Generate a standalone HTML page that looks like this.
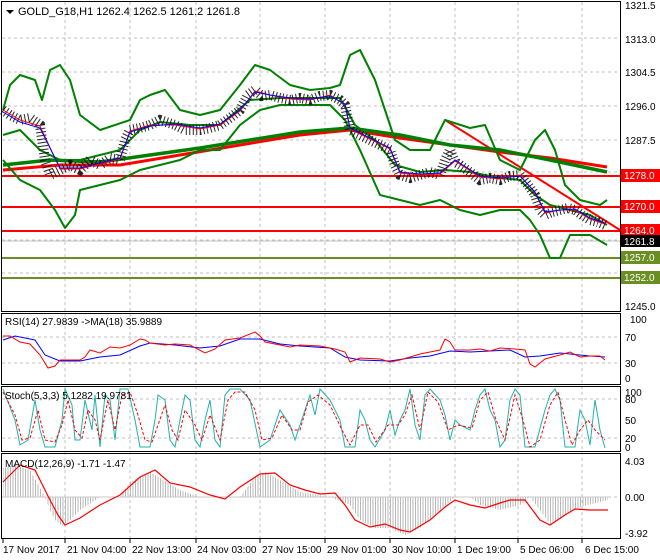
<!DOCTYPE html>
<html><head><meta charset="utf-8"><style>
body{margin:0;background:#fff;}
svg{display:block;font-family:"Liberation Sans",sans-serif;font-size:10px;}
</style></head><body>
<svg width="660" height="560" viewBox="0 0 660 560" xmlns="http://www.w3.org/2000/svg">
<defs><pattern id="vl" width="2.5" height="4" patternUnits="userSpaceOnUse"><rect x="0" y="0" width="1" height="4" fill="#b8b8b8"/></pattern></defs>
<rect width="660" height="560" fill="#fff"/>
<g stroke="#c0c0c0" stroke-dasharray="3,3" stroke-width="1">
<line x1="65" y1="2" x2="65" y2="538"/><line x1="130" y1="2" x2="130" y2="538"/><line x1="196" y1="2" x2="196" y2="538"/><line x1="260" y1="2" x2="260" y2="538"/><line x1="325" y1="2" x2="325" y2="538"/><line x1="390" y1="2" x2="390" y2="538"/><line x1="455" y1="2" x2="455" y2="538"/><line x1="518" y1="2" x2="518" y2="538"/><line x1="582" y1="2" x2="582" y2="538"/>
<line x1="2" y1="38" x2="620" y2="38"/><line x1="2" y1="72" x2="620" y2="72"/><line x1="2" y1="106" x2="620" y2="106"/><line x1="2" y1="140" x2="620" y2="140"/><line x1="2" y1="172" x2="620" y2="172"/><line x1="2" y1="207" x2="620" y2="207"/><line x1="2" y1="240" x2="620" y2="240"/><line x1="2" y1="273" x2="620" y2="273"/>
<line x1="2" y1="337" x2="620" y2="337"/><line x1="2" y1="363" x2="620" y2="363"/>
<line x1="2" y1="399" x2="620" y2="399"/><line x1="2" y1="438" x2="620" y2="438"/>
<line x1="2" y1="497" x2="620" y2="497"/>
</g>
<g fill="none" stroke="#000" stroke-width="1">
<rect x="1.5" y="1.5" width="619" height="310"/>
<rect x="1.5" y="313.5" width="619" height="71"/>
<rect x="1.5" y="386.5" width="619" height="65"/>
<rect x="1.5" y="453.5" width="619" height="85"/>
</g>
<line x1="2" y1="176" x2="620" y2="176" stroke="#f00" stroke-width="2"/>
<line x1="2" y1="207" x2="620" y2="207" stroke="#f00" stroke-width="2"/>
<line x1="2" y1="231" x2="620" y2="231" stroke="#f00" stroke-width="2"/>
<line x1="2" y1="258" x2="620" y2="258" stroke="#6b8e23" stroke-width="2"/>
<line x1="2" y1="278" x2="620" y2="278" stroke="#6b8e23" stroke-width="2"/>
<line x1="2" y1="241" x2="620" y2="241" stroke="#c0c0c0" stroke-width="1"/>
<line x1="445" y1="120" x2="620" y2="230" stroke="#f00" stroke-width="2"/>
<polyline fill="none" stroke="#f00" stroke-width="3" points="3,170 60,165 120,165 180,155 240,145 300,135 350,130 400,138 450,145 500,152 550,158 607,167"/>
<polyline fill="none" stroke="#008000" stroke-width="3.5" points="3,165 50,160 100,162 150,155 200,148 250,140 300,132 350,128 400,135 450,145 500,150 550,160 607,172"/>
<g fill="none" stroke="#008000" stroke-width="2" stroke-linejoin="round">
<polyline points="3,110 10,85 20,75 35,80 42,100 50,70 60,65 70,80 80,115 100,130 130,120 140,100 150,95 165,90 180,110 200,115 220,110 240,85 255,65 270,70 290,85 310,90 330,88 340,85 350,55 360,50 375,80 385,110 395,140 410,150 430,150 445,120 470,128 485,125 500,160 520,170 535,140 545,130 555,150 565,185 580,200 600,205 607,200"/>
<polyline points="3,160 20,180 40,190 55,210 65,228 75,215 80,190 100,185 120,180 140,170 160,165 180,160 200,150 220,150 240,125 260,110 280,105 300,105 330,105 345,120 360,150 380,195 400,200 420,205 440,200 460,210 480,215 500,210 520,210 530,220 540,235 550,258 560,258 570,235 590,235 607,245"/>
<polyline points="3,135 20,130 40,150 60,160 80,160 100,155 120,150 140,130 160,122 190,125 220,125 250,100 280,98 310,98 340,98 355,125 375,140 395,165 420,172 445,170 470,172 500,178 520,180 535,195 550,205 570,210 590,215 607,225"/>
</g>
<polyline fill="none" stroke="#000" stroke-width="10" stroke-dasharray="1,2.5" opacity="0.85" points="3,110 10,115 20,120 30,118 40,125 45,160 50,175 60,170 70,165 80,170 90,160 100,165 110,158 120,160 125,140 130,130 140,128 150,125 160,120 175,125 185,130 200,130 210,128 220,125 230,118 240,110 248,95 255,90 262,96 270,95 280,98 290,100 300,98 310,100 320,96 330,95 340,100 345,105 350,130 360,135 370,140 380,145 390,150 395,165 400,175 410,178 420,175 430,172 440,175 445,160 450,150 455,162 460,165 470,172 480,180 490,178 500,180 510,176 520,175 528,185 535,195 540,210 545,215 552,212 560,210 568,208 575,210 582,215 590,220 598,222 605,225"/>
<polyline fill="none" stroke="#f00" stroke-width="1" points="3,110 20,120 40,126 60,169 80,169 100,164 120,159 130,131 150,125 175,125 200,129 220,125 240,111 255,91 270,95 290,99 310,100 330,95 345,105 350,129 370,139 390,149 400,173 420,175 440,174 455,161 480,177 500,179 520,175 535,193 545,213 560,210 575,210 590,219 605,224"/>
<polyline fill="none" stroke="#00f" stroke-width="1" points="3,112 20,122 40,128 60,168 80,168 100,163 120,158 130,132 150,126 175,124 200,128 220,124 240,110 255,92 270,95 290,98 310,99 330,96 345,104 350,128 370,138 390,148 400,172 420,174 440,173 455,160 480,176 500,178 520,176 535,192 545,212 560,210 575,209 590,218 605,223"/>
<polyline fill="none" stroke="#00f" stroke-width="1" points="3,340 15,336 35,340 45,355 60,361 80,361 100,357 120,355 140,346 150,343 175,345 200,348 220,346 240,339 260,339 280,344 300,346 330,348 345,357 360,360 390,361 410,358 430,356 450,351 470,352 490,351 510,350 525,357 540,356 560,353 590,356 605,357"/>
<polyline fill="none" stroke="#f00" stroke-width="1" points="3,336 10,336 20,342 30,344 40,355 48,368 55,366 60,360 80,360 85,357 90,350 100,353 110,347 120,348 130,345 140,339 145,340 150,343 165,345 175,344 190,345 205,353 215,349 225,340 240,338 255,332 260,336 265,342 280,345 290,347 300,345 320,346 335,349 345,352 350,362 360,358 380,359 390,362 400,360 410,357 420,354 440,350 445,339 450,342 455,350 470,350 480,349 490,351 500,348 515,349 525,350 530,364 535,367 545,359 560,355 570,352 580,357 590,356 600,356 605,360"/>
<polyline fill="none" stroke="#20b2aa" stroke-width="1" points="3,389 15,420 20,445 28,440 35,400 40,430 45,447 55,447 62,420 65,389 72,405 75,440 80,440 85,400 92,430 95,395 100,447 105,395 110,400 115,440 120,389 128,389 135,420 140,447 150,447 155,420 158,395 165,400 170,440 175,447 180,420 185,395 190,400 195,440 200,447 205,420 210,400 215,440 220,447 225,395 230,389 240,389 250,400 260,447 270,440 280,410 290,425 295,440 305,410 310,395 315,415 320,389 330,400 340,420 345,447 355,447 360,410 365,420 370,440 375,447 385,430 390,410 395,435 400,420 405,410 410,389 415,425 420,440 425,395 430,389 440,400 445,415 450,440 455,420 460,425 470,430 475,410 480,395 485,389 490,410 495,420 500,447 505,440 510,400 515,389 520,395 525,447 535,447 545,410 550,395 555,389 560,400 565,447 575,447 580,410 585,420 590,445 595,400 600,430 605,448"/>
<polyline fill="none" stroke="#f00" stroke-width="1" stroke-dasharray="3,2" points="3,392 15,415 22,440 30,438 38,410 45,440 55,442 62,425 68,400 75,430 82,438 88,410 95,420 100,440 108,400 115,430 122,395 130,392 138,415 145,440 152,442 158,425 165,405 172,430 178,440 185,410 195,425 202,440 210,415 220,440 228,400 235,392 245,392 255,410 262,440 272,438 282,415 292,430 300,430 308,402 318,395 330,405 342,430 350,445 360,425 368,425 376,442 388,425 398,425 405,415 412,395 420,430 428,392 438,402 448,430 458,425 472,428 480,400 488,392 496,420 505,440 515,395 523,420 530,447 540,440 550,405 558,392 565,420 572,445 580,430 588,420 595,430 605,440"/>
<path fill="url(#vl)" d="M3,497 L3,468 L15,465 L30,470 L45,497 L50,510 L55,520 L62,526 L70,520 L80,510 L100,497 L120,497 L130,482 L150,472 L160,478 L180,490 L200,497 L215,497 L225,497 L240,497 L255,477 L265,472 L280,480 L300,492 L330,497 L350,505 L360,520 L375,528 L390,528 L405,535 L420,528 L440,510 L455,497 L470,497 L480,505 L500,510 L520,505 L530,497 L540,510 L550,524 L565,515 L580,507 L608,500 L608,497 Z"/>
<line x1="2" y1="497" x2="610" y2="497" stroke="#c8c8c8"/>
<polyline fill="none" stroke="#f00" stroke-width="1.2" points="3,482 10,475 20,465 35,470 50,500 58,515 65,525 80,518 100,505 120,495 140,477 155,470 170,483 190,487 210,495 225,499 240,487 260,474 275,473 290,485 305,490 320,494 335,493 345,505 355,520 370,527 385,524 400,530 410,532 430,520 445,507 455,500 470,505 485,508 500,503 510,500 525,500 540,520 550,525 565,515 575,509 590,510 608,510"/>
<path d="M6,10 L14,10 L10,14 Z" fill="#000"/>
<text x="18" y="15" font-size="11" fill="#000">GOLD_G18,H1  1262.4 1262.5 1261.2 1261.8</text>
<text x="5" y="325" font-size="10">RSI(14) 27.9839  -&gt;MA(18) 35.9889</text>
<text x="5" y="399" font-size="10">Stoch(5,3,3) 5.1282 19.9781</text>
<text x="5" y="467" font-size="10">MACD(12,26,9) -1.71 -1.47</text>
<g font-size="10" fill="#000">
<text x="625" y="9">1321.5</text><text x="625" y="43">1313.0</text><text x="625" y="76">1304.5</text><text x="625" y="110">1296.0</text><text x="625" y="144">1287.5</text><text x="625" y="310">1245.0</text>
<text x="630" y="323">100</text><text x="625" y="341">70</text><text x="625" y="367">30</text><text x="625" y="382">0</text>
<text x="625" y="396">100</text><text x="625" y="403">80</text><text x="625" y="424">50</text><text x="625" y="442">20</text><text x="625" y="451">0</text>
<text x="625" y="465">4.03</text><text x="625" y="501">0.00</text><text x="625" y="537">-3.92</text>
</g>
<rect x="621" y="169" width="39" height="13" fill="#f00"/><text x="624" y="179" fill="#fff">1278.0</text>
<rect x="621" y="200" width="39" height="13" fill="#f00"/><text x="624" y="210" fill="#fff">1270.0</text>
<rect x="621" y="224" width="39" height="13" fill="#f00"/><text x="624" y="234" fill="#fff">1264.0</text>
<rect x="621" y="235" width="39" height="12" fill="#000"/><text x="624" y="245" fill="#fff">1261.8</text>
<rect x="621" y="251" width="39" height="13" fill="#6b8e23"/><text x="624" y="261" fill="#fff">1257.0</text>
<rect x="621" y="271" width="39" height="13" fill="#6b8e23"/><text x="624" y="281" fill="#fff">1252.0</text>
<g stroke="#000"><line x1="3" y1="539" x2="3" y2="543"/><line x1="65" y1="539" x2="65" y2="543"/><line x1="130" y1="539" x2="130" y2="543"/><line x1="196" y1="539" x2="196" y2="543"/><line x1="260" y1="539" x2="260" y2="543"/><line x1="325" y1="539" x2="325" y2="543"/><line x1="390" y1="539" x2="390" y2="543"/><line x1="455" y1="539" x2="455" y2="543"/><line x1="518" y1="539" x2="518" y2="543"/><line x1="582" y1="539" x2="582" y2="543"/></g>
<g font-size="10" fill="#000">
<text x="3" y="553">17 Nov 2017</text><text x="67" y="553">21 Nov 04:00</text><text x="132" y="553">22 Nov 13:00</text><text x="197" y="553">24 Nov 03:00</text><text x="262" y="553">27 Nov 15:00</text><text x="327" y="553">29 Nov 01:00</text><text x="392" y="553">30 Nov 10:00</text><text x="457" y="553">1 Dec 19:00</text><text x="520" y="553">5 Dec 06:00</text><text x="585" y="553">6 Dec 15:00</text>
</g>
</svg>
</body></html>
